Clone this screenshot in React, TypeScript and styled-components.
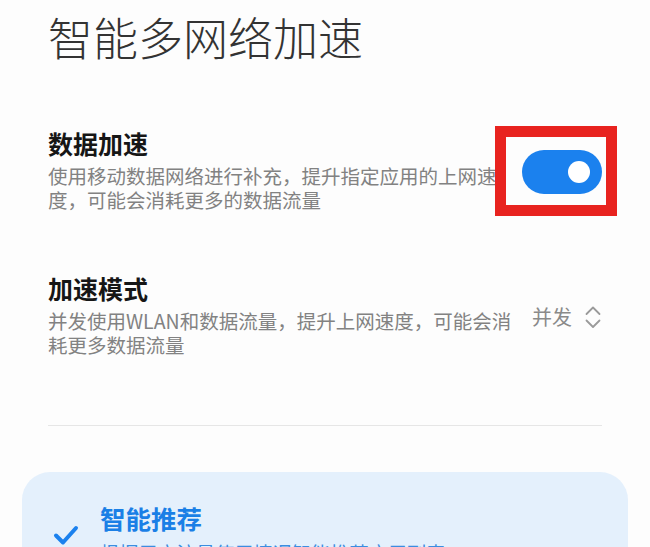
import styled, { createGlobalStyle } from "styled-components"

const fontStack = `"Noto Sans CJK SC", "Noto Sans", sans-serif`
const colors = {
  blue: '#1b81ee',
  title: '#333333',
  heading: '#161616',
  desc: '#828282',
  red: '#e8231f',
}

const GlobalStyle = createGlobalStyle`
  html, body {
    margin: 0;
    padding: 0;
    background: #fdfdfd;
  }
  body {
    font-family: ${fontStack};
    overflow: hidden;
  }
`

function ChevronUpDown(){
  return <svg width="18" height="30" viewBox="0 0 18 30" fill="none">
    <polyline points="2.5,12 9,5.5 15.5,12" stroke="#9a9a9a" strokeWidth="1.8" strokeLinecap="round" strokeLinejoin="round"/>
    <polyline points="2.5,18.5 9,25 15.5,18.5" stroke="#9a9a9a" strokeWidth="1.8" strokeLinecap="round" strokeLinejoin="round"/>
  </svg>
}

function CheckMark(){
  return <svg width="26" height="22" viewBox="0 0 26 22" fill="none">
    <path d="M3 11.5 L10 18.5 L23 4" stroke={colors.blue} strokeWidth="4" strokeLinecap="round" strokeLinejoin="round"/>
  </svg>
}

function App(){
  return <Page>
    <GlobalStyle/>
    <Title>智能多网络加速</Title>
    <Section>
      <SettingRow top={72}>
        <TextColumn>
          <Heading>数据加速</Heading>
          <Desc>使用移动数据网络进行补充，提升指定应用的上网速度，可能会消耗更多的数据流量</Desc>
        </TextColumn>
        <SwitchWrap>
          <Switch>
            <Knob/>
          </Switch>
          <Highlight/>
        </SwitchWrap>
      </SettingRow>
      <SettingRow top={64}>
        <TextColumn>
          <Heading>加速模式</Heading>
          <Desc>并发使用WLAN和数据流量，提升上网速度，可能会消耗更多数据流量</Desc>
        </TextColumn>
        <ValueView>
          <ValueText>并发</ValueText>
          <ChevronUpDown/>
        </ValueView>
      </SettingRow>
      <Divider/>
    </Section>
    <Card>
      <CardRow>
        <CheckBox>
          <CheckMark/>
        </CheckBox>
        <TextColumn>
          <CardTitle>智能推荐</CardTitle>
          <CardDesc>根据用户流量使用情况智能推荐应用列表</CardDesc>
        </TextColumn>
      </CardRow>
    </Card>
  </Page>
}

const Page = styled.div`
  width: 650px;
  height: 547px;
  padding: 0 22px;
  box-sizing: border-box;
  overflow: hidden;
`
const Title = styled.h1`
  margin: 14px 0 0 26px;
  font-size: 45px;
  line-height: 45px;
  font-weight: 200;
  color: ${colors.title};
  letter-spacing: 0;
`
const Section = styled.div`
  padding: 0 26px;
`
const SettingRow = styled.div<{ top: number }>`
  display: flex;
  align-items: center;
  gap: 20px;
  margin-top: ${({ top }) => top}px;
`
const TextColumn = styled.div`
  flex: 1;
  display: flex;
  flex-direction: column;
  min-width: 0;
`
const Heading = styled.div`
  font-size: 25px;
  line-height: 25px;
  font-weight: 700;
  color: ${colors.heading};
`
const Desc = styled.div`
  margin-top: 8px;
  font-size: 19.5px;
  line-height: 24px;
  color: ${colors.desc};
`
const SwitchWrap = styled.div`
  position: relative;
  flex-shrink: 0;
`
const Switch = styled.div`
  width: 80px;
  height: 44px;
  border-radius: 22px;
  background: ${colors.blue};
  display: flex;
  align-items: center;
  justify-content: flex-end;
  padding-right: 12px;
  box-sizing: border-box;
`
const Knob = styled.div`
  width: 22px;
  height: 22px;
  border-radius: 50%;
  background: #ffffff;
`
const Highlight = styled.div`
  position: absolute;
  left: -27px;
  right: -15px;
  top: -24px;
  bottom: -22px;
  border: 11px solid ${colors.red};
  pointer-events: none;
`
const ValueView = styled.div`
  display: flex;
  align-items: center;
  gap: 12px;
  flex-shrink: 0;
`
const ValueText = styled.span`
  font-size: 20px;
  line-height: 24px;
  color: #8a8a8a;
`
const Divider = styled.div`
  height: 1px;
  background: #e6e6e6;
  margin-top: 68px;
`
const Card = styled.div`
  margin-top: 46px;
  background: #e4f0fc;
  border-radius: 28px;
  height: 200px;
  padding: 33px 30px 0 31px;
  box-sizing: border-box;
`
const CardRow = styled.div`
  display: flex;
  align-items: center;
  gap: 21px;
`
const CheckBox = styled.div`
  width: 26px;
  height: 22px;
  flex-shrink: 0;
  display: flex;
`
const CardTitle = styled.div`
  font-size: 25.5px;
  line-height: 26px;
  font-weight: 700;
  color: #1a7fe6;
`
const CardDesc = styled.div`
  margin-top: 10px;
  font-size: 19.2px;
  line-height: 24px;
  color: #3c8de0;
`

export default App
